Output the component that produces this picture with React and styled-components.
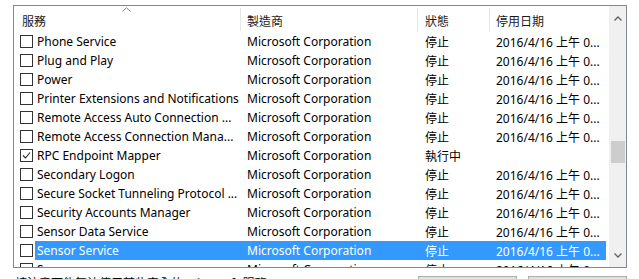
import styled, { createGlobalStyle } from 'styled-components';

const GlobalStyle = createGlobalStyle`
  html, body {
    margin: 0;
    padding: 0;
    background: #ffffff;
  }
  body {
    font-family: "Segoe UI", "Noto Sans", "Noto Sans CJK TC", sans-serif;
    font-size: 12px;
    color: #000;
    overflow: hidden;
  }
`;

const Page = styled.div`
  padding: 5px 12px 0 13px;
  width: 639px;
  height: 279px;
  box-sizing: border-box;
  overflow: hidden;
`;

const ListBox = styled.div`
  width: 614px;
  height: 263px;
  box-sizing: border-box;
  border: 1px solid #828790;
  display: flex;
  background: #fff;
`;

const Content = styled.div`
  flex: 1;
  display: flex;
  flex-direction: column;
  overflow: hidden;
`;

const COLS = '227px 177px 72px 119px';

const HeaderRow = styled.div`
  display: grid;
  grid-template-columns: ${COLS};
  height: 26px;
  flex-shrink: 0;
`;

const HeaderCell = styled.div`
  position: relative;
  display: flex;
  align-items: center;
  padding-left: ${(p) => p.$pad || 6}px;
  padding-top: 2px;
  color: #1a1a1a;
  border-right: ${(p) => (p.$last ? 'none' : '1px solid #e5e5e5')};
  margin: 2px 0 1px;
`;

const SortArrow = styled.svg`
  position: absolute;
  top: -1px;
  left: 108px;
`;

const Rows = styled.div`
  flex: 1;
  overflow: hidden;
`;

const Row = styled.div`
  display: grid;
  grid-template-columns: ${COLS};
  height: 19px;
  align-items: center;
  white-space: nowrap;
`;

const NameCell = styled.div`
  display: flex;
  align-items: center;
  height: 100%;
  padding-left: 6px;
  overflow: hidden;
`;

const Box = styled.span`
  width: 11px;
  height: 11px;
  border: 1px solid #333;
  flex-shrink: 0;
  display: flex;
  align-items: center;
  justify-content: center;
  background: #fff;
  margin-right: 2px;
`;

const Label = styled.span`
  display: flex;
  align-items: center;
  height: 100%;
  padding-left: 2px;
  flex: 1;
  overflow: hidden;
  background: ${(p) => (p.$selected ? '#3399ff' : 'transparent')};
  color: ${(p) => (p.$selected ? '#fff' : '#000')};
`;

const Cell = styled.div`
  display: flex;
  align-items: center;
  height: 100%;
  padding-left: ${(p) => p.$pad || 6}px;
  overflow: hidden;
  background: ${(p) => (p.$selected ? '#3399ff' : 'transparent')};
  color: ${(p) => (p.$selected ? '#fff' : '#000')};
  margin-right: ${(p) => p.$trim || 0}px;
`;

const ScrollBar = styled.div`
  width: 17px;
  flex-shrink: 0;
  background: #f0f0f0;
  display: flex;
  flex-direction: column;
  align-items: center;
  justify-content: space-between;
  position: relative;
`;

const ArrowBtn = styled.div`
  height: 17px;
  width: 17px;
  display: flex;
  align-items: center;
  justify-content: center;
  margin-top: ${(p) => (p.$down ? 0 : 4)}px;
  margin-bottom: ${(p) => (p.$down ? 3 : 0)}px;
`;

const Thumb = styled.div`
  position: absolute;
  left: 2px;
  top: 135px;
  width: 14px;
  height: 22px;
  background: #cdcdcd;
`;

const Footer = styled.div`
  display: flex;
  justify-content: space-between;
  align-items: flex-start;
  width: 614px;
`;

const Note = styled.div`
  margin-top: 6px;
  padding-left: 2px;
  color: #000;
  white-space: nowrap;
`;

const Buttons = styled.div`
  display: flex;
  gap: 11px;
  margin-top: 8px;
`;

const Button = styled.div`
  width: 99px;
  height: 23px;
  box-sizing: border-box;
  border: 1px solid #adadad;
  background: #e1e1e1;
`;

const services = [
  { name: 'Phone Service', status: '停止' },
  { name: 'Plug and Play', status: '停止' },
  { name: 'Power', status: '停止' },
  { name: 'Printer Extensions and Notifications', status: '停止' },
  { name: 'Remote Access Auto Connection ...', status: '停止' },
  { name: 'Remote Access Connection Mana...', status: '停止' },
  { name: 'RPC Endpoint Mapper', status: '執行中', checked: true, noDate: true },
  { name: 'Secondary Logon', status: '停止' },
  { name: 'Secure Socket Tunneling Protocol ...', status: '停止' },
  { name: 'Security Accounts Manager', status: '停止' },
  { name: 'Sensor Data Service', status: '停止' },
  { name: 'Sensor Service', status: '停止', selected: true },
  { name: 'Server', status: '停止' },
];

const Check = () => (
  <svg width="9" height="9" viewBox="0 0 9 9">
    <path d="M1 4.5 L3.5 7 L8 1.5" fill="none" stroke="#222" strokeWidth="1.1" />
  </svg>
);

const Chevron = ({ down }) => (
  <svg width="8" height="5" viewBox="0 0 8 5">
    <path
      d={down ? 'M0.5 0.5 L4 4 L7.5 0.5' : 'M0.5 4.5 L4 1 L7.5 4.5'}
      fill="none"
      stroke="#606060"
      strokeWidth="1.3"
    />
  </svg>
);

const App = () => {
  return (
    <>
      <GlobalStyle />
      <Page>
        <ListBox>
          <Content>
            <HeaderRow>
              <HeaderCell $pad={8}>
                <SortArrow width="9" height="5" viewBox="0 0 9 5">
                  <path d="M0.5 4.5 L4.5 0.8 L8.5 4.5" fill="none" stroke="#808080" strokeWidth="1" />
                </SortArrow>
                服務
              </HeaderCell>
              <HeaderCell>製造商</HeaderCell>
              <HeaderCell $pad={7}>狀態</HeaderCell>
              <HeaderCell $last>停用日期</HeaderCell>
            </HeaderRow>
            <Rows>
              {services.map((s, index) => (
                <Row key={index}>
                  <NameCell>
                    <Box>{s.checked && <Check />}</Box>
                    <Label $selected={s.selected}>{s.name}</Label>
                  </NameCell>
                  <Cell $selected={s.selected}>Microsoft Corporation</Cell>
                  <Cell $selected={s.selected} $pad={7}>{s.status}</Cell>
                  <Cell $selected={s.selected} $trim={3}>
                    {s.noDate ? '' : '2016/4/16 上午 0...'}
                  </Cell>
                </Row>
              ))}
            </Rows>
          </Content>
          <ScrollBar>
            <ArrowBtn>
              <Chevron />
            </ArrowBtn>
            <Thumb />
            <ArrowBtn $down>
              <Chevron down />
            </ArrowBtn>
          </ScrollBar>
        </ListBox>
        <Footer>
          <Note>請注意可能無法停用某些安全的 Microsoft 服務</Note>
          <Buttons>
            <Button />
            <Button />
          </Buttons>
        </Footer>
      </Page>
    </>
  );
};

export default App;
